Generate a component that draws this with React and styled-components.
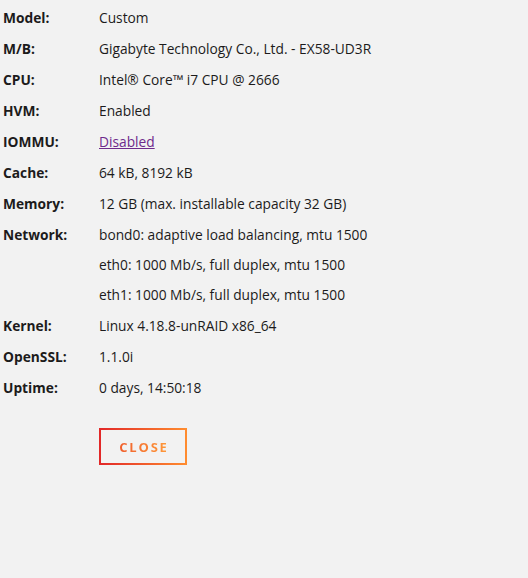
import React from "react";
import styled, { createGlobalStyle } from "styled-components";

const Global = createGlobalStyle`
  html, body { margin: 0; padding: 0; background: #f2f2f2; }
  body { font-family: "Open Sans", "Noto Sans", sans-serif; color: #1c1b1b; }
`;

const Page = styled.div`
  width: 528px;
  height: 578px;
  padding: 7px 0 0 3px;
  box-sizing: border-box;
`;

const Table = styled.div`
  display: grid;
  grid-template-columns: 96px 1fr;
  row-gap: 9px;
  align-items: start;
`;

const Label = styled.div`
  font-size: 13.75px;
  font-weight: 700;
  line-height: 22px;
`;

const Value = styled.div`
  display: flex;
  flex-direction: column;
  gap: 8px;
  font-size: 13.75px;
  line-height: 22px;
  white-space: nowrap;
`;

const Link = styled.a`
  color: #6e2a8c;
  text-decoration: underline;
  cursor: pointer;
`;

const Actions = styled.div`
  padding: 29px 0 0 96px;
`;

const CloseButton = styled.button`
  width: 88px;
  height: 37px;
  border: 2px solid;
  border-image: linear-gradient(90deg, #e22828 0%, #ff8c2f 100%) 1;
  background: transparent;
  font-family: inherit;
  font-size: 13px;
  font-weight: 700;
  letter-spacing: 1.8px;
  text-transform: uppercase;
  padding: 0 0 0 2px;
  cursor: pointer;
`;

const GradText = styled.span`
  background: linear-gradient(90deg, #f0602e 0%, #ff9a3a 100%);
  -webkit-background-clip: text;
  background-clip: text;
  color: transparent;
`;

const rows = [
  ["Model:", ["Custom"]],
  ["M/B:", ["Gigabyte Technology Co., Ltd. - EX58-UD3R"]],
  ["CPU:", ["Intel® Core™ i7 CPU @ 2666"]],
  ["HVM:", ["Enabled"]],
  ["IOMMU:", [<Link key="l">Disabled</Link>]],
  ["Cache:", ["64 kB, 8192 kB"]],
  ["Memory:", ["12 GB (max. installable capacity 32 GB)"]],
  [
    "Network:",
    [
      "bond0: adaptive load balancing, mtu 1500",
      "eth0: 1000 Mb/s, full duplex, mtu 1500",
      "eth1: 1000 Mb/s, full duplex, mtu 1500",
    ],
  ],
  ["Kernel:", ["Linux 4.18.8-unRAID x86_64"]],
  ["OpenSSL:", ["1.1.0i"]],
  ["Uptime:", ["0 days, 14:50:18"]],
];

export default function App() {
  return (
    <Page>
      <Global />
      <Table>
        {rows.map(([l, lines], i) => (
          <React.Fragment key={i}>
            <Label>{l}</Label>
            <Value>
              {lines.map((t, j) => (
                <div key={j}>{t}</div>
              ))}
            </Value>
          </React.Fragment>
        ))}
      </Table>
      <Actions>
        <CloseButton>
          <GradText>Close</GradText>
        </CloseButton>
      </Actions>
    </Page>
  );
}
